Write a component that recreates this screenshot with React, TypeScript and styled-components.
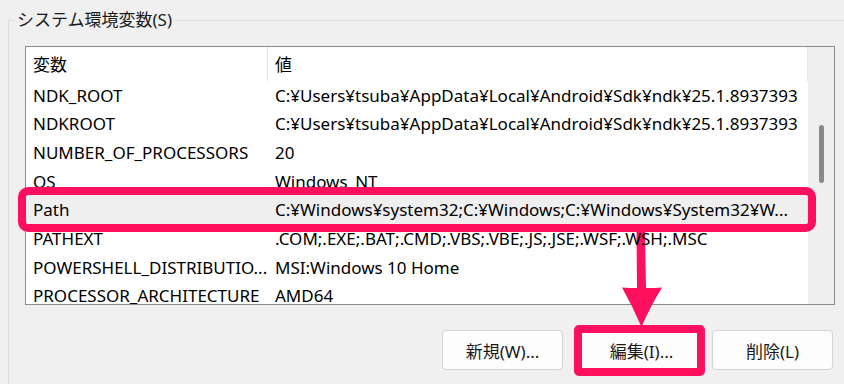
import React from "react";
import styled, { createGlobalStyle } from "styled-components";

const PINK = "#ff105f";
const FONT = `"Noto Sans", "Noto Sans CJK JP", sans-serif`;

const GlobalStyle = createGlobalStyle`
  html, body {
    margin: 0;
    padding: 0;
    background: #f0f0f0;
    overflow: hidden;
  }
  body {
    font-family: ${FONT};
    color: #000;
  }
`;

const Page = styled.div`
  position: relative;
  width: 844px;
  height: 384px;
  padding: 10px 0 0 8px;
  box-sizing: border-box;
  overflow: hidden;
`;

const Group = styled.fieldset`
  margin: 0;
  padding: 0;
  width: 860px;
  height: 400px;
  box-sizing: border-box;
  border: 1px solid #dcdcdc;
  border-right: none;
  border-bottom: none;
`;

const Legend = styled.legend`
  margin-left: 6px;
  padding: 0 2px;
  font-size: 17px;
  line-height: 20px;
  color: #1a1a1a;
`;

const ListBox = styled.div`
  margin: 16px 0 0 16px;
  width: 810px;
  height: 259px;
  box-sizing: border-box;
  border: 1px solid #8c8c8c;
  background: #fff;
  display: flex;
`;

/* clip rows at the bottom only, so the pink outline can spill sideways */
const Table = styled.div`
  flex: 1;
  position: relative;
  z-index: 1;
  clip-path: inset(0 -30px 0 -30px);
`;

const Row = styled.div<{ $header?: boolean; $selected?: boolean }>`
  display: grid;
  grid-template-columns: 242px 1fr;
  height: ${(p) => (p.$header ? "33.7px" : "28.7px")};
  align-items: center;
  font-size: 17px;
  position: relative;
  z-index: ${(p) => (p.$selected ? 1 : 0)};
  background: ${(p) => (p.$selected ? "#efefef" : "transparent")};
  outline: ${(p) => (p.$selected ? `8px solid ${PINK}` : "none")};
  border-radius: ${(p) => (p.$selected ? "2px" : "0")};
`;

const Cell = styled.div<{ $header?: boolean }>`
  height: 100%;
  display: flex;
  align-items: center;
  padding-left: 7px;
  white-space: nowrap;
  overflow: hidden;
  box-sizing: border-box;
  border-right: ${(p) => (p.$header ? "1px solid #e5e5e5" : "none")};
`;

const ScrollTrack = styled.div`
  width: 26px;
  background: #efefef;
  display: flex;
  justify-content: center;
  padding-top: 78px;
  box-sizing: border-box;
`;

const Thumb = styled.div`
  width: 5px;
  height: 58px;
  border-radius: 3px;
  background: #8a8a8a;
`;

const ButtonRow = styled.div`
  width: 810px;
  margin: 25px 0 0 16px;
  padding-right: 2px;
  box-sizing: border-box;
  display: flex;
  justify-content: flex-end;
  gap: 14px;
`;

const Button = styled.button<{ $highlight?: boolean }>`
  width: ${(p) => (p.$highlight ? "131px" : "121px")};
  height: ${(p) => (p.$highlight ? "51px" : "40px")};
  margin: ${(p) => (p.$highlight ? "-5px -7px -6px -3px" : "0")};
  box-sizing: border-box;
  background: #fdfdfd;
  border: ${(p) => (p.$highlight ? `8px solid ${PINK}` : "1px solid #d3d3d3")};
  border-radius: ${(p) => (p.$highlight ? "5px" : "4px")};
  font-family: ${FONT};
  font-size: 17px;
  color: #1a1a1a;
  padding: 0;
  padding-left: ${(p) => (p.$highlight ? "4px" : "0")};
  display: flex;
  align-items: center;
  justify-content: center;
`;

const Arrow = styled.svg`
  position: absolute;
  left: 620px;
  top: 231px;
  width: 44px;
  height: 100px;
`;

const rows: [string, string][] = [
  ["NDK_ROOT", "C:¥Users¥tsuba¥AppData¥Local¥Android¥Sdk¥ndk¥25.1.8937393"],
  ["NDKROOT", "C:¥Users¥tsuba¥AppData¥Local¥Android¥Sdk¥ndk¥25.1.8937393"],
  ["NUMBER_OF_PROCESSORS", "20"],
  ["OS", "Windows_NT"],
  ["Path", "C:¥Windows¥system32;C:¥Windows;C:¥Windows¥System32¥W..."],
  ["PATHEXT", ".COM;.EXE;.BAT;.CMD;.VBS;.VBE;.JS;.JSE;.WSF;.WSH;.MSC"],
  ["POWERSHELL_DISTRIBUTIO...", "MSI:Windows 10 Home"],
  ["PROCESSOR_ARCHITECTURE", "AMD64"],
];

export default function App() {
  return (
    <Page>
      <GlobalStyle />
      <Group>
        <Legend>システム環境変数(S)</Legend>
        <ListBox>
          <Table>
            <Row $header>
              <Cell $header>変数</Cell>
              <Cell $header>値</Cell>
            </Row>
            {rows.map(([name, value]) => (
              <Row key={name} $selected={name === "Path"}>
                <Cell>{name}</Cell>
                <Cell>{value}</Cell>
              </Row>
            ))}
          </Table>
          <ScrollTrack>
            <Thumb />
          </ScrollTrack>
        </ListBox>
        <ButtonRow>
          <Button>新規(W)...</Button>
          <Button $highlight>編集(I)...</Button>
          <Button>削除(L)</Button>
        </ButtonRow>
      </Group>
      <Arrow viewBox="0 0 44 100">
        <path
          d="M16.5 0 L25 0 L26 57 Q34 57 42 56.5 Q30 76 21.5 96 Q13 76 2 56.5 Q10 57 17 57 Z"
          fill={PINK}
        />
      </Arrow>
    </Page>
  );
}
